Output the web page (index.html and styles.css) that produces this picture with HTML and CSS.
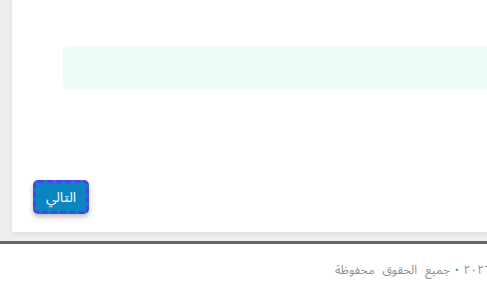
FILE: index.html
```html
<!DOCTYPE html>
<html lang="ar" dir="rtl">
<head>
  <meta charset="utf-8">
  <title>الخطوة</title>
  <link rel="stylesheet" href="styles.css">
</head>
<body>
  <main class="page">
    <section class="step-card">
      <div class="step-body">
        <div class="notice-box"></div>
      </div>
      <div class="step-actions">
        <button class="next-button" type="button">التالي</button>
      </div>
    </section>
  </main>

  <footer class="site-footer">
    <div class="footer-text">
      <span class="year">© ٢٠٢٦</span>
      <span class="dot">•</span>
      <span class="rights">جميع الحقوق محفوظة</span>
    </div>
  </footer>
</body>
</html>
```

FILE: styles.css
```css
html, body {
  margin: 0;
  padding: 0;
  overflow: hidden;
}
body {
  font-family: "Noto Sans Arabic", "DejaVu Sans", sans-serif;
  background: #fff;
  width: 487px;
  height: 291px;
}
.page {
  background: #efefef;
  padding: 0 0 9px 12px;
  border-bottom: 3px solid #5d676f;
}
.step-card {
  background: #fff;
  height: 232px;
  margin-right: -40px;
  box-shadow: 0 2px 6px rgba(0, 0, 0, 0.08);
  display: flex;
  flex-direction: column;
}
.step-body {
  padding: 46px 0 0 51px;
  flex-grow: 1;
}
.notice-box {
  background: #effcf5;
  height: 43px;
  border-radius: 4px;
}
.step-actions {
  display: flex;
  justify-content: flex-end;
  padding: 0 21px 18px 21px;
}
.next-button {
  background: #0b84c2;
  color: #f4fbff;
  border: 3px dashed #5040e8;
  border-radius: 5px;
  width: 56px;
  height: 34px;
  font-family: inherit;
  font-size: 14px;
  padding: 0 0 2px;
  box-shadow: 0 3px 5px rgba(0, 0, 0, 0.25);
  cursor: pointer;
}
.site-footer {
  padding-top: 14px;
}
.footer-text {
  margin-right: -17px;
  font-size: 12px;
  color: #8d8d8d;
  display: flex;
  gap: 5px;
  align-items: center;
}
.rights {
  word-spacing: 5px;
}
.dot {
  color: #16a0a0;
  font-size: 9px;
}
```
